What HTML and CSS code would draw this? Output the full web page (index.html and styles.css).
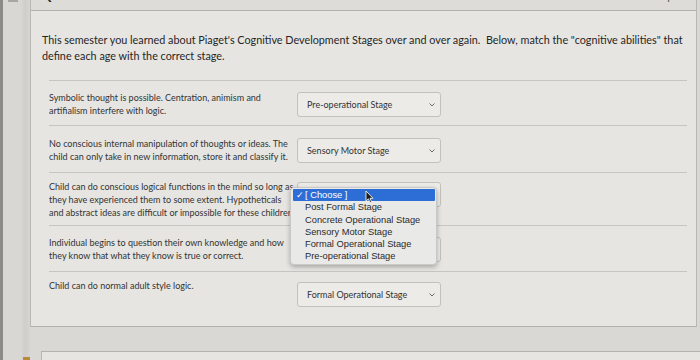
FILE: index.html
```html
<!DOCTYPE html>
<html>
<head>
<meta charset="utf-8">
<link rel="stylesheet" href="styles.css">
</head>
<body>
<div class="page">
  <div class="rail"></div>
  <div class="gutter">
    <div class="gutter-tab"></div>
    <div class="gutter-flag"></div>
  </div>
  <div class="main">
    <div class="question">
      <div class="qhead">
        <span class="qtitle">Question 32</span>
        <span class="qpts">1 pts</span>
      </div>
      <div class="qbody">
        <p class="prompt">This semester you learned about Piaget's Cognitive Development Stages over and over again.&nbsp; Below, match the "cognitive abilities" that<br>define each age with the correct stage.</p>
        <div class="answers">
          <div class="row row-1">
            <div class="atext">Symbolic thought is possible. Centration, animism and<br>artifialism interfere with logic.</div>
            <div class="select"><span class="sel-text">Pre-operational Stage</span><svg class="chev" width="6" height="4" viewBox="0 0 6 4"><polyline points="0.5,0.5 3,3 5.5,0.5" fill="none" stroke="#6b6b6b" stroke-width="1"/></svg></div>
          </div>
          <div class="row row-2">
            <div class="atext">No conscious internal manipulation of thoughts or ideas. The<br>child can only take in new information, store it and classify it.</div>
            <div class="select"><span class="sel-text">Sensory Motor Stage</span><svg class="chev" width="6" height="4" viewBox="0 0 6 4"><polyline points="0.5,0.5 3,3 5.5,0.5" fill="none" stroke="#6b6b6b" stroke-width="1"/></svg></div>
          </div>
          <div class="row row-3">
            <div class="atext">Child can do conscious logical functions in the mind so long as<br>they have experienced them to some extent. Hypotheticals<br>and abstract ideas are difficult or impossible for these children.</div>
            <div class="select select-open"><span class="sel-text sel-hidden">[ Choose ]</span><svg class="chev" width="6" height="4" viewBox="0 0 6 4"><polyline points="0.5,0.5 3,3 5.5,0.5" fill="none" stroke="#6b6b6b" stroke-width="1"/></svg>
              <div class="menu">
                <div class="mitem mitem-on"><span class="check">✓</span>[ Choose ]</div>
                <div class="mitem">Post Formal Stage</div>
                <div class="mitem">Concrete Operational Stage</div>
                <div class="mitem">Sensory Motor Stage</div>
                <div class="mitem">Formal Operational Stage</div>
                <div class="mitem">Pre-operational Stage</div>
                <svg class="cursor" width="9" height="14" viewBox="0 0 9 14"><path d="M1,1 L1,11 L3.4,8.8 L5,12.6 L6.6,11.9 L5,8.3 L8,8.3 Z" fill="#1b1b1b" stroke="#f2f2f2" stroke-width="0.9"/></svg>
              </div>
            </div>
          </div>
          <div class="row row-4">
            <div class="atext">Individual begins to question their own knowledge and how<br>they know that what they know is true or correct.</div>
            <div class="select"><span class="sel-text sel-hidden">Formal Operational Stage</span><svg class="chev" width="6" height="4" viewBox="0 0 6 4"><polyline points="0.5,0.5 3,3 5.5,0.5" fill="none" stroke="#6b6b6b" stroke-width="1"/></svg></div>
          </div>
          <div class="row row-5">
            <div class="atext">Child can do normal adult style logic.</div>
            <div class="select"><span class="sel-text">Formal Operational Stage</span><svg class="chev" width="6" height="4" viewBox="0 0 6 4"><polyline points="0.5,0.5 3,3 5.5,0.5" fill="none" stroke="#6b6b6b" stroke-width="1"/></svg></div>
          </div>
        </div>
      </div>
    </div>
    <div class="next"></div>
  </div>
</div>
</body>
</html>
```
FILE: styles.css
```css
html, body {
  margin: 0;
  padding: 0;
}
body {
  width: 700px;
  height: 360px;
  overflow: hidden;
  background: #d9d8d4;
  font-family: Lato, "Open Sans", sans-serif;
  color: #333;
}
.page {
  display: flex;
  width: 700px;
  height: 360px;
}
.rail {
  flex: 0 0 3px;
  background: #8c8b88;
}
.gutter {
  flex: 0 0 27px;
  display: flex;
  flex-direction: column;
  justify-content: space-between;
  background: linear-gradient(to right, #d8d7d3 0, #d8d7d3 18px, #cfcecb 22px, #d6d5d1 27px);
}
.gutter-tab {
  margin: 0 0 0 5px;
  width: 10px;
  height: 2px;
  background: #a8a7a4;
}
.gutter-flag {
  margin: 0 0 0 20px;
  width: 7px;
  height: 3px;
  background: #b98a3a;
}
.main {
  flex: 1;
  display: flex;
  flex-direction: column;
}
.question {
  width: 667px;
  height: 327px;
  box-sizing: border-box;
  border-left: 1px solid #b9b8b4;
  border-right: 1px solid #b9b8b4;
  border-bottom: 1px solid #b3b2ae;
  background: #e6e5e2;
  display: flex;
  flex-direction: column;
}
.qhead {
  height: 12px;
  box-sizing: border-box;
  border-bottom: 1px solid #b3b2ae;
  background: #dddcd8;
  display: flex;
  align-items: flex-end;
  justify-content: space-between;
  overflow: hidden;
  padding: 0 14px 8px 10px;
}
.qtitle {
  font-weight: 700;
  font-size: 13px;
  line-height: 14px;
  color: #2a2a2a;
}
.qpts {
  font-size: 11px;
  line-height: 12px;
  color: #555;
}
.qbody {
  flex: 1;
  display: flex;
  flex-direction: column;
}
.prompt {
  margin: 21px 0 0 11px;
  font-size: 10.8px;
  line-height: 16px;
  color: #262626;
  white-space: nowrap;
}
.answers {
  margin: 16px 9px 0 18px;
  border-top: 1px solid #c6c5c1;
  display: flex;
  flex-direction: column;
}
.row {
  display: flex;
  align-items: flex-start;
  box-sizing: border-box;
  border-bottom: 1px solid #c6c5c1;
}
.row-1 { height: 45px; padding-top: 10px; }
.row-2 { height: 47px; padding-top: 11px; }
.row-3 { height: 53px; padding-top: 7px; }
.row-4 { height: 46px; padding-top: 10px; }
.row-5 { height: 54px; padding-top: 7px; border-bottom: none; }
.atext {
  flex: 0 0 248px;
  min-width: 0;
  font-size: 9px;
  line-height: 13px;
  color: #333;
  white-space: nowrap;
}
.select {
  position: relative;
  flex: 0 0 144px;
  height: 25px;
  box-sizing: border-box;
  margin-top: 1px;
  border: 1px solid #c2c1bd;
  border-radius: 3px;
  background: #ecebe8;
  display: flex;
  align-items: center;
  justify-content: space-between;
  padding: 0 5px 0 9px;
  font-size: 9px;
  color: #333;
}
.sel-hidden {
  visibility: hidden;
}
.row-3 .select { margin-top: 2px; }
.row-5 .select { margin-top: 3px; }
.chev {
  display: block;
}
.menu {
  position: absolute;
  z-index: 10;
  left: -8px;
  top: 4px;
  width: 147px;
  box-sizing: border-box;
  padding: 1px 0 1px;
  background: #e9e9e8;
  border: 1px solid #c9c9c7;
  border-radius: 4px;
  box-shadow: 0 2px 5px rgba(0, 0, 0, 0.28);
  font-family: "Liberation Sans", Arial, sans-serif;
  font-size: 9.3px;
  color: #2a2a2a;
}
.mitem {
  height: 12.3px;
  line-height: 12.3px;
  padding-left: 14px;
  white-space: nowrap;
}
.mitem-on {
  margin: 0 1px 0 2px;
  padding-left: 3px;
  background: #2d6ed6;
  color: #fff;
  border-radius: 1px;
}
.check {
  display: inline-block;
  width: 9px;
  font-size: 8.5px;
}
.cursor {
  position: absolute;
  left: 74px;
  top: 2px;
}
.next {
  margin: 24px 0 0 11px;
  flex: 1;
  border-top: 1px solid #b3b2ae;
  border-left: 1px solid #b9b8b4;
  background: #e6e5e2;
}
```
